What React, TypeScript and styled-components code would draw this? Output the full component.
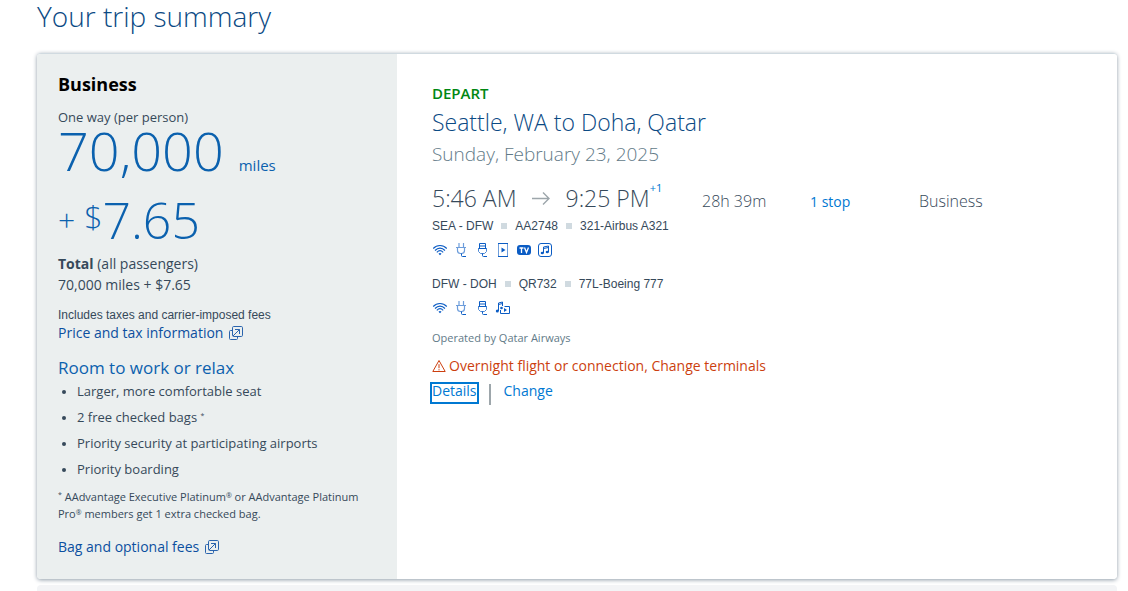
import React from "react";
import styled, { createGlobalStyle } from "styled-components";

const GlobalStyle = createGlobalStyle`
  * { box-sizing: border-box; }
  body {
    margin: 0;
    background: #fff;
    color: #36495a;
    font-family: "Open Sans", "Noto Sans", sans-serif;
    font-size: 14px;
  }
  h1, h2, h3, p, ul { margin: 0; padding: 0; }
`;

const Page = styled.main`
  padding: 0 11px 0 37px;
`;

const PageTitle = styled.h1`
  padding-bottom: 21px;
  color: #0b4a84;
  font-size: 28px;
  font-weight: 300;
  line-height: 32px;
`;

const Card = styled.section`
  display: grid;
  grid-template-columns: minmax(0, 1fr) minmax(0, 2fr);
  border-top: 1px solid #d0dae0;
  border-radius: 4px;
  overflow: hidden;
  box-shadow: 0 1px 4px #8f9ca8;
`;

const NextCard = styled.div`
  height: 6px;
  margin-top: 6px;
  border-radius: 4px 4px 0 0;
  background: #f3f4f6;
`;

const FarePanel = styled.aside`
  padding: 18px 20px 23px 21px;
  background: #ebefef;
`;

const CabinName = styled.h2`
  color: #000;
  font-size: 18px;
  font-weight: 700;
  line-height: 24px;
`;

const PerPerson = styled.p`
  margin-top: 11px;
  font-size: 13px;
  line-height: 20px;
`;

const Price = styled.p<{ $gap?: number; $size: number }>`
  display: flex;
  align-items: baseline;
  margin-top: ${(p) => p.$gap ?? 0}px;
  color: #0b61ae;
  font-size: ${(p) => p.$size}px;
  font-weight: 300;
  line-height: 46px;
`;

const PriceUnit = styled.span`
  margin-left: 15px;
  font-size: 15px;
  font-weight: 400;
  line-height: 20px;
`;

const PriceSign = styled.span`
  align-self: center;
  margin-right: 9px;
  font-size: 30px;
`;

const Currency = styled.span`
  align-self: flex-start;
  font-size: 32px;
  line-height: 38px;
`;

const Totals = styled.p`
  margin-top: 10px;
  font-size: 14px;
  line-height: 21px;
`;

const TaxNote = styled.p`
  margin-top: 11px;
  font-family: "Liberation Sans", Arial, sans-serif;
  font-size: 12px;
  line-height: 18px;
`;

const InfoLink = styled.a<{ $gap?: number }>`
  display: flex;
  align-items: center;
  gap: 6px;
  margin-top: ${(p) => p.$gap ?? 0}px;
  color: #0b4fa0;
  font-size: 14px;
  line-height: 18px;
  text-decoration: none;
`;

const PerksTitle = styled.h3`
  margin-top: 16px;
  color: #0b61ae;
  font-size: 17px;
  font-weight: 400;
  line-height: 20px;
`;

const Perks = styled.ul`
  padding-left: 19px;
  font-size: 13px;
  line-height: 26px;

  li::marker { font-size: 11px; }
`;

const Sup = styled.sup`
  font-size: 7px;
  line-height: 0;
  vertical-align: 4px;
`;

const Registered = styled(Sup)`
  vertical-align: 3px;
`;

const Footnote = styled.p`
  margin-top: 6px;
  font-size: 11px;
  line-height: 17px;
`;

const TripPanel = styled.div`
  padding: 29px 0 0 35px;
  background: #fff;
`;

const Direction = styled.p`
  color: #008712;
  font-size: 15px;
  font-weight: 600;
  line-height: 20px;
`;

const Route = styled.h2`
  margin-top: 4px;
  color: #0b4a84;
  font-size: 23px;
  font-weight: 300;
  line-height: 30px;
`;

const TripDate = styled.p`
  margin-top: 4px;
  color: #627a88;
  font-size: 19px;
  font-weight: 300;
  line-height: 26px;
`;

const Schedule = styled.div`
  display: grid;
  grid-template-columns: 270fr 108fr 109fr 198fr;
  align-items: baseline;
  margin-top: 15px;
  font-size: 16px;
  font-weight: 300;
  line-height: 20px;
`;

const Times = styled.div`
  display: flex;
  align-items: center;
  gap: 15px;
  font-size: 23px;
  line-height: 32px;
`;

const DayOffset = styled.sup`
  color: #0078d2;
  font-size: 11px;
  font-weight: 400;
  line-height: 0;
  vertical-align: 15px;
`;

const TextLink = styled.a`
  color: #0078d2;
  font-size: 14px;
  font-weight: 400;
  text-decoration: none;
`;

const Segment = styled.p<{ $gap: number }>`
  display: flex;
  align-items: center;
  gap: 8px;
  margin-top: ${(p) => p.$gap}px;
  font-family: "Liberation Sans", Arial, sans-serif;
  font-size: 12px;
  line-height: 16px;
`;

const Square = styled.span`
  width: 6px;
  height: 6px;
  background: #d0dae0;
`;

const Amenities = styled.div`
  display: flex;
  gap: 5px;
  margin-top: 8px;
`;

const Operator = styled.p`
  margin-top: 14px;
  color: #627a88;
  font-size: 11px;
  line-height: 16px;
`;

const Warning = styled.p`
  display: flex;
  align-items: center;
  gap: 3px;
  margin-top: 10px;
  color: #cc3f0f;
  font-size: 14px;
  line-height: 20px;
`;

const Actions = styled.div`
  display: flex;
  margin: 6px 0 0 -2px;
`;

const ActionButton = styled.button<{ $focused?: boolean }>`
  height: 22px;
  padding: 0 0 4px;
  border: 2px solid ${(p) => (p.$focused ? "#0078d2" : "transparent")};
  background: none;
  color: #0078d2;
  font-family: inherit;
  font-size: 14px;
  line-height: 14px;
`;

const Divider = styled.span`
  width: 2px;
  height: 21px;
  margin: 2px 11px 0 10px;
  background: #9da6ab;
`;

const PopupIcon = () => (
  <svg width="14" height="14" viewBox="0 0 14 14" fill="none" stroke="#2a64ad" aria-hidden="true">
    <rect x="3.5" y="0.5" width="10" height="10" rx="1.2" />
    <path d="M3.500 4.500h-2a1 1 0 0 0-1 1v7a1 1 0 0 0 1 1h6a1 1 0 0 0 1-1v-2M4 10l6.500-6.500M6 3.500h4.500v4.500" />
  </svg>
);

const ArrowIcon = () => (
  <svg width="19" height="16" viewBox="0 0 19 16" fill="none" stroke="#9da6ab" strokeWidth="1.400" aria-hidden="true">
    <path d="M0 8.500h17M11 2.500l6 6-6 6" />
  </svg>
);

const WarningIcon = () => (
  <svg width="14" height="14" viewBox="0 0 14 14" fill="none" stroke="#cc3f0f" strokeLinejoin="round" aria-hidden="true">
    <path d="M7 1.500 13.200 12.500H.8zM7 5.200v4M7 10.200v1.200" />
  </svg>
);

const Glyph = ({ label, children }: { label: string; children: React.ReactNode }) => (
  <svg width="16" height="16" viewBox="0 0 16 16" fill="none" stroke="#0b5cc4" role="img" aria-label={label}>
    {children}
  </svg>
);

const WifiIcon = () => (
  <Glyph label="Wi-Fi">
    <path d="M1.200 6.500C5 2.500 11 2.500 14.800 6.500M3 8.500C6 5.300 10 5.300 13 8.500M4.800 10.300C7 8.100 9 8.100 11.200 10.300" strokeWidth="1.100" />
    <path d="M6.500 11.700q1.500-1.200 3 0L8 13.200z" fill="#0b5cc4" stroke="none" />
  </Glyph>
);

const PlugIcon = () => (
  <Glyph label="Power outlet">
    <path stroke="#6d9ddb" strokeWidth="1.200" d="M6 1v4M10.500 1v4M3 5.500h10M4.500 5.500v3a3 3 0 0 0 3 3h1a3 3 0 0 0 3-3v-3" />
    <path d="M8.500 11.500v2q0 1 1 1h3.500" />
  </Glyph>
);

const UsbIcon = () => (
  <Glyph label="USB port">
    <path d="M5.500 6V1.500h6V6M5.500 4h6" />
    <path stroke="#4d88d4" d="M4.500 6.500h8v3l-2 2h-4l-2-2z" />
    <path d="M4.500 6.500h8M8.500 11.500v2q0 1 1 1h3.500" />
  </Glyph>
);

const DeviceIcon = () => (
  <Glyph label="Streaming to personal device">
    <path stroke="#6d9ddb" d="M3.500 1.500v13M12.500 1.500v13" />
    <path d="M3 1.500h10M3 14.500h10" />
    <path d="M6.500 5.500v5l4-2.500z" fill="#0b5cc4" stroke="none" />
  </Glyph>
);

const TvIcon = () => (
  <Glyph label="Seatback TV">
    <rect x="1" y="3" width="14" height="10" rx="3" fill="#0b5cc4" stroke="none" />
    <path d="M3.500 6h4M5.500 6v5M8.500 5.500l2 5 2-5" stroke="#fff" strokeWidth="1.300" />
  </Glyph>
);

const MusicIcon = () => (
  <Glyph label="Music">
    <rect x="1.500" y="1.500" width="13" height="13" rx="2.500" />
    <path d="M6.500 11V5l5-1v6M6.500 6.500l5-1" />
    <ellipse cx="5.300" cy="11" rx="1.600" ry="1.300" fill="#0b5cc4" stroke="none" />
    <ellipse cx="10.300" cy="10" rx="1.600" ry="1.300" fill="#0b5cc4" stroke="none" />
  </Glyph>
);

const MediaIcon = () => (
  <Glyph label="Music and video">
    <path d="M3.500 11V3l4-1v4M3.500 4.500l4-1" />
    <circle cx="2.300" cy="11" r="1.500" fill="#0b5cc4" stroke="none" />
    <path d="M5.500 10v3.500h9v-7h-5" />
    <circle cx="6.500" cy="8" r="1.300" fill="#0b5cc4" stroke="none" />
    <path d="M9 8v4l3-2z" fill="#0b5cc4" stroke="none" />
  </Glyph>
);

export default function App() {
  return (
    <>
      <GlobalStyle />
      <Page>
        <PageTitle>Your trip summary</PageTitle>
        <Card>
          <FarePanel>
            <CabinName>Business</CabinName>
            <PerPerson>One way (per person)</PerPerson>
            <Price $size={54}>
              70,000 <PriceUnit>miles</PriceUnit>
            </Price>
            <Price $size={50} $gap={22}>
              <PriceSign>+</PriceSign>
              <Currency>$</Currency>7.65
            </Price>
            <Totals>
              <b>Total</b> (all passengers)
              <br />
              70,000 miles + $7.65
            </Totals>
            <TaxNote>Includes taxes and carrier-imposed fees</TaxNote>
            <InfoLink href="#price">
              Price and tax information <PopupIcon />
            </InfoLink>
            <PerksTitle>Room to work or relax</PerksTitle>
            <Perks>
              <li>Larger, more comfortable seat</li>
              <li>
                2 free checked bags <Sup>*</Sup>
              </li>
              <li>Priority security at participating airports</li>
              <li>Priority boarding</li>
            </Perks>
            <Footnote>
              <Sup>*</Sup> AAdvantage Executive Platinum<Registered>®</Registered> or AAdvantage Platinum
              Pro<Registered>®</Registered> members get 1 extra checked bag.
            </Footnote>
            <InfoLink href="#bags" $gap={16}>
              Bag and optional fees <PopupIcon />
            </InfoLink>
          </FarePanel>
          <TripPanel>
            <Direction>DEPART</Direction>
            <Route>Seattle, WA to Doha, Qatar</Route>
            <TripDate>Sunday, February 23, 2025</TripDate>
            <Schedule>
              <Times>
                <span>5:46 AM</span>
                <ArrowIcon />
                <span>
                  9:25 PM<DayOffset>+1</DayOffset>
                </span>
              </Times>
              <span>28h 39m</span>
              <TextLink href="#stops">1 stop</TextLink>
              <span>Business</span>
            </Schedule>
            <Segment $gap={4}>
              SEA - DFW <Square /> AA2748 <Square /> 321-Airbus A321
            </Segment>
            <Amenities>
              <WifiIcon />
              <PlugIcon />
              <UsbIcon />
              <DeviceIcon />
              <TvIcon />
              <MusicIcon />
            </Amenities>
            <Segment $gap={18}>
              DFW - DOH <Square /> QR732 <Square /> 77L-Boeing 777
            </Segment>
            <Amenities>
              <WifiIcon />
              <PlugIcon />
              <UsbIcon />
              <MediaIcon />
            </Amenities>
            <Operator>Operated by Qatar Airways</Operator>
            <Warning>
              <WarningIcon /> Overnight flight or connection, Change terminals
            </Warning>
            <Actions>
              <ActionButton type="button" $focused>
                Details
              </ActionButton>
              <Divider />
              <ActionButton type="button">Change</ActionButton>
            </Actions>
          </TripPanel>
        </Card>
        <NextCard />
      </Page>
    </>
  );
}
